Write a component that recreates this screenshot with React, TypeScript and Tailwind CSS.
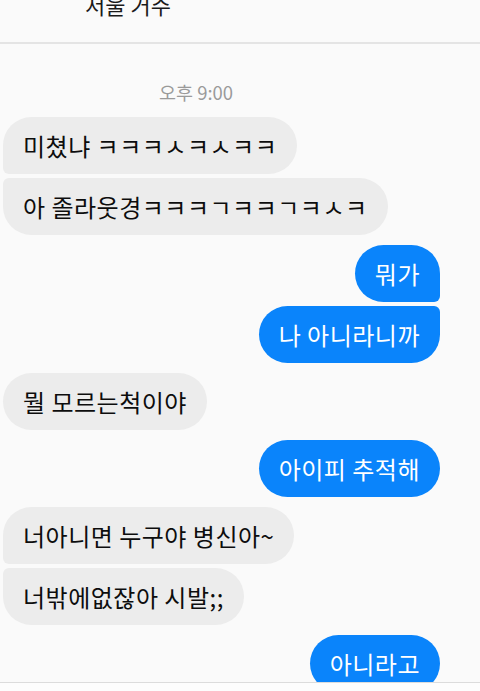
import React from "react";

type Msg = { text: string; me: boolean; pos: "single" | "first" | "last" };

const groups: Msg[][] = [
  [
    { text: "미쳤냐 ㅋㅋㅋㅅㅋㅅㅋㅋ", me: false, pos: "first" },
    { text: "아 졸라웃경ㅋㅋㅋㄱㅋㅋㄱㅋㅅㅋ", me: false, pos: "last" },
  ],
  [
    { text: "뭐가", me: true, pos: "first" },
    { text: "나 아니라니까", me: true, pos: "last" },
  ],
  [{ text: "뭘 모르는척이야", me: false, pos: "single" }],
  [{ text: "아이피 추적해", me: true, pos: "single" }],
  [
    { text: "너아니면 누구야 병신아~", me: false, pos: "first" },
    { text: "너밖에없잖아 시발;;", me: false, pos: "last" },
  ],
  [{ text: "아니라고", me: true, pos: "single" }],
];

function radius(m: Msg): string {
  if (m.pos === "single") return "rounded-[29px]";
  if (m.me) {
    return m.pos === "first"
      ? "rounded-l-[29px] rounded-tr-[29px] rounded-br-[6px]"
      : "rounded-l-[29px] rounded-br-[29px] rounded-tr-[6px]";
  }
  return m.pos === "first"
    ? "rounded-r-[29px] rounded-tl-[29px] rounded-bl-[6px]"
    : "rounded-r-[29px] rounded-bl-[29px] rounded-tl-[6px]";
}

function Bubble({ m }: { m: Msg }) {
  return (
    <div className={m.me ? "flex justify-end" : "flex justify-start"}>
      <div
        className={
          "h-[57px] flex items-center px-[20px] text-[24px] tracking-[0.5px] leading-[30px] whitespace-nowrap " +
          radius(m) +
          (m.me ? " bg-[#0a84fb] text-white" : " bg-[#ececec] text-[#0d0d0d]")
        }
      >
        {m.text}
      </div>
    </div>
  );
}

export default function App() {
  return (
    <div
      className="w-[480px] h-[691px] bg-[#fafafa] flex flex-col overflow-hidden"
      style={{ fontFamily: '"Noto Sans CJK KR", "Noto Sans", sans-serif' }}
    >
      <div className="h-[44px] shrink-0 border-b-2 border-[#e4e4e4] overflow-hidden">
        <div className="pl-[85px] -mt-[11px] text-[22px] leading-[30px] text-[#1a1a1a]">
          서울 거주
        </div>
      </div>
      <div className="flex-1 overflow-hidden pl-[3px] pr-[40px]">
        <div className="pt-[36px] pb-[13px] pl-[156px] text-[18.5px] leading-[24px] text-[#9a9a9a]">
          오후 9:00
        </div>
        <div className="flex flex-col gap-[10px]">
          {groups.map((g, i) => (
            <div key={i} className="flex flex-col gap-[4px]">
              {g.map((m, j) => (
                <Bubble key={j} m={m} />
              ))}
            </div>
          ))}
        </div>
      </div>
      <div className="h-[9px] shrink-0 border-t border-[#dcdcdc] bg-[#fdfdfd]" />
    </div>
  );
}
